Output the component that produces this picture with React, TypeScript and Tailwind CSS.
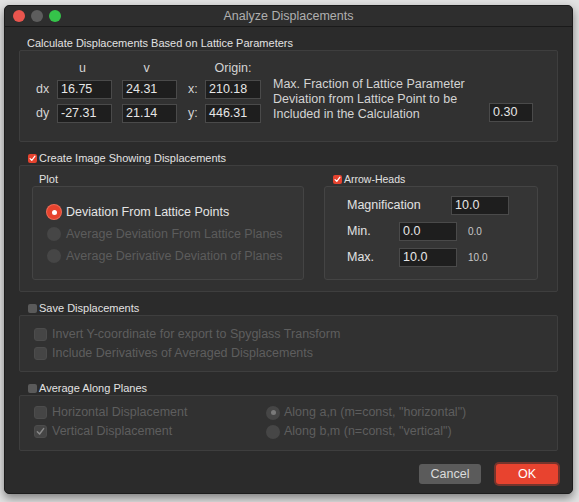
import React from 'react';

const font = { fontFamily: '"Liberation Sans", Arial, sans-serif' };

function Field({ value, w }: { value: string; w: string }) {
    return (
        <div className={`${w} h-[19px] bg-[#1e1e1e] border border-[#4a4a4a] text-[12.5px] leading-[17px] pl-[3px] text-[#e6e6e6]`}>
            {value}
        </div>
    );
}

function Check({ on }: { on: boolean }) {
    if (!on) return <span className="w-[9px] h-[9px] rounded-[2px] bg-[#5a5a5a] shrink-0" />;
    return (
        <span className="w-[9px] h-[9px] rounded-[2px] bg-[#e5432f] shrink-0 flex items-center justify-center">
            <svg width="7" height="7" viewBox="0 0 8 8">
                <path d="M1.2 4.2 L3.2 6.2 L6.8 1.4" fill="none" stroke="#fff" strokeWidth="1.4" strokeLinecap="round" strokeLinejoin="round" />
            </svg>
        </span>
    );
}

function DimCheck({ on }: { on?: boolean }) {
    return (
        <span className="w-[13px] h-[13px] rounded-[3px] bg-[#454545] border border-[#4c4c4c] shrink-0 flex items-center justify-center">
            {on && (
                <svg width="9" height="9" viewBox="0 0 8 8">
                    <path d="M1.2 4.2 L3.2 6.2 L6.8 1.4" fill="none" stroke="#8a8a8a" strokeWidth="1.3" strokeLinecap="round" strokeLinejoin="round" />
                </svg>
            )}
        </span>
    );
}

function DimRadio({ on }: { on?: boolean }) {
    return (
        <span className="w-[14px] h-[14px] rounded-full bg-[#464646] shrink-0 flex items-center justify-center">
            {on && <span className="w-[5px] h-[5px] rounded-full bg-[#7a7a7a]" />}
        </span>
    );
}

function Header({ on, label }: { on: boolean; label: string }) {
    return (
        <div className="mt-[9px] h-[14px] flex items-center gap-[2px] pl-[9px] text-[11px] text-[#e2e2e2]">
            <Check on={on} />
            <span>{label}</span>
        </div>
    );
}

export default function App() {
    return (
        <div className="w-[579px] h-[502px] bg-[#e2e2e2] pt-[5px] pl-[4px] overflow-hidden" style={font}>
            <div className="w-[569px] h-[489px] bg-[#2b2b2b] rounded-[5px] shadow-[0_4px_10px_rgba(0,0,0,0.45)] flex flex-col border border-[#1c1c1c]">
                {/* title bar */}
                <div className="h-[21px] shrink-0 relative flex items-center border-b border-[#1a1a1a] bg-[#2e2e2e] rounded-t-[5px]">
                    <div className="flex gap-[6px] pl-[8px]">
                        <span className="w-[12px] h-[12px] rounded-full bg-[#e9554e]" />
                        <span className="w-[12px] h-[12px] rounded-full bg-[#5d5d5d]" />
                        <span className="w-[12px] h-[12px] rounded-full bg-[#35c34a]" />
                    </div>
                    <div className="absolute inset-0 flex items-center justify-center text-[12.5px] text-[#b0b0b0]">Analyze Displacements</div>
                </div>

                <div className="px-[14px] flex flex-col">
                    {/* section 1 */}
                    <div className="mt-[10px] h-[13px] leading-[13px] pl-[8px] text-[11px] text-[#e2e2e2]">
                        Calculate Displacements Based on Lattice Parameters
                    </div>
                    <div className="h-[92px] bg-[#313131] border border-[#3e3e3e] rounded-[2px] pt-[10px] pl-[16px] pr-[24px] flex">
                        <div className="self-start grid content-start grid-cols-[21px_55px_65px_28px_56px] gap-y-[5px] text-[#d4d4d4] text-[12.5px] items-center">
                            <span />
                            <span className="text-center h-[14px] leading-[14px] pr-[4px]">u</span>
                            <span className="text-center h-[14px] leading-[14px] pl-[4px]">v</span>
                            <span />
                            <span className="text-center h-[14px] leading-[14px]">Origin:</span>
                            <span>dx</span>
                            <Field value="16.75" w="w-[55px]" />
                            <div className="pl-[10px]"><Field value="24.31" w="w-[55px]" /></div>
                            <span className="pl-[11px]">x:</span>
                            <Field value="210.18" w="w-[56px]" />
                            <span>dy</span>
                            <Field value="-27.31" w="w-[55px]" />
                            <div className="pl-[10px]"><Field value="21.14" w="w-[55px]" /></div>
                            <span className="pl-[11px]">y:</span>
                            <Field value="446.31" w="w-[56px]" />
                        </div>
                        <div className="flex flex-1 items-end pl-[12px] pb-[19px]">
                            <div className="text-[12.5px] leading-[15px] text-[#d4d4d4]">
                                Max. Fraction of Lattice Parameter
                                <br />
                                Deviation from Lattice Point to be
                                <br />
                                Included in the Calculation
                            </div>
                            <div className="ml-auto">
                                <Field value="0.30" w="w-[44px]" />
                            </div>
                        </div>
                    </div>

                    {/* section 2 */}
                    <Header on label="Create Image Showing Displacements" />
                    <div className="h-[127px] bg-[#313131] border border-[#3e3e3e] rounded-[2px] pt-[7px] pl-[12px] pr-[19px] flex gap-[20px]">
                        <div className="w-[272px] flex flex-col">
                            <div className="h-[13px] leading-[13px] pl-[7px] text-[11px] text-[#e2e2e2]">Plot</div>
                            <div className="h-[94px] bg-[#353535] border border-[#444] rounded-[3px] pt-[14px] pl-[14px] flex flex-col text-[12.5px]">
                                <div className="h-[22px] flex items-center gap-[5px] text-[#e4e4e4]">
                                    <span className="w-[14px] h-[14px] rounded-full bg-[#e6432e] shadow-[0_0_0_1px_#f06a55] flex items-center justify-center shrink-0">
                                        <span className="w-[5px] h-[5px] rounded-full bg-white" />
                                    </span>
                                    <span>Deviation From Lattice Points</span>
                                </div>
                                <div className="h-[22px] flex items-center gap-[5px] text-[#5c5c5c]">
                                    <DimRadio />
                                    <span>Average Deviation From Lattice Planes</span>
                                </div>
                                <div className="h-[22px] flex items-center gap-[5px] text-[#5c5c5c]">
                                    <DimRadio />
                                    <span>Average Derivative Deviation of Planes</span>
                                </div>
                            </div>
                        </div>
                        <div className="w-[214px] flex flex-col">
                            <div className="h-[13px] flex items-center gap-[2px] pl-[9px] text-[10.5px] text-[#e2e2e2]">
                                <Check on />
                                <span>Arrow-Heads</span>
                            </div>
                            <div className="h-[94px] bg-[#353535] border border-[#444] rounded-[3px] pt-[9px] pl-[22px] flex flex-col gap-[7px] text-[12.5px] text-[#e2e2e2]">
                                <div className="h-[19px] flex items-center">
                                    <span className="w-[104px]">Magnification</span>
                                    <Field value="10.0" w="w-[58px]" />
                                </div>
                                <div className="h-[19px] flex items-center">
                                    <span className="w-[52px]">Min.</span>
                                    <Field value="0.0" w="w-[58px]" />
                                    <span className="ml-[11px] text-[10px] text-[#c8c8c8]">0.0</span>
                                </div>
                                <div className="h-[19px] flex items-center">
                                    <span className="w-[52px]">Max.</span>
                                    <Field value="10.0" w="w-[58px]" />
                                    <span className="ml-[11px] text-[10px] text-[#c8c8c8]">10.0</span>
                                </div>
                            </div>
                        </div>
                    </div>

                    {/* section 3 */}
                    <Header on={false} label="Save Displacements" />
                    <div className="h-[57px] bg-[#313131] border border-[#3e3e3e] rounded-[2px] pt-[9px] pl-[14px] flex flex-col text-[12.5px] text-[#5e5e5e]">
                        <div className="h-[19px] flex items-center gap-[5px]">
                            <DimCheck />
                            <span>Invert Y-coordinate for export to Spyglass Transform</span>
                        </div>
                        <div className="h-[19px] flex items-center gap-[5px]">
                            <DimCheck />
                            <span>Include Derivatives of Averaged Displacements</span>
                        </div>
                    </div>

                    {/* section 4 */}
                    <Header on={false} label="Average Along Planes" />
                    <div className="h-[56px] bg-[#313131] border border-[#3e3e3e] rounded-[2px] pt-[7px] pl-[14px] grid grid-cols-[232px_1fr] grid-rows-[19px_19px] content-start text-[12.5px] text-[#5e5e5e]">
                        <div className="flex items-center gap-[5px]">
                            <DimCheck />
                            <span>Horizontal Displacement</span>
                        </div>
                        <div className="flex items-center gap-[4px]">
                            <DimRadio on />
                            <span>Along a,n (m=const, "horizontal")</span>
                        </div>
                        <div className="flex items-center gap-[5px]">
                            <DimCheck on />
                            <span>Vertical Displacement</span>
                        </div>
                        <div className="flex items-center gap-[4px]">
                            <DimRadio />
                            <span>Along b,m (n=const, "vertical")</span>
                        </div>
                    </div>

                    {/* buttons */}
                    <div className="mt-[13px] flex justify-end gap-[15px]">
                        <button className="w-[62px] h-[20px] rounded-[3px] bg-[#5b5b5b] text-[12.5px] text-[#dcdcdc]">Cancel</button>
                        <button className="w-[62px] h-[20px] rounded-[3px] bg-[#e8432f] text-[12.5px] text-white shadow-[0_0_0_2px_rgba(232,67,47,0.4)]">OK</button>
                    </div>
                </div>
            </div>
        </div>
    );
}
